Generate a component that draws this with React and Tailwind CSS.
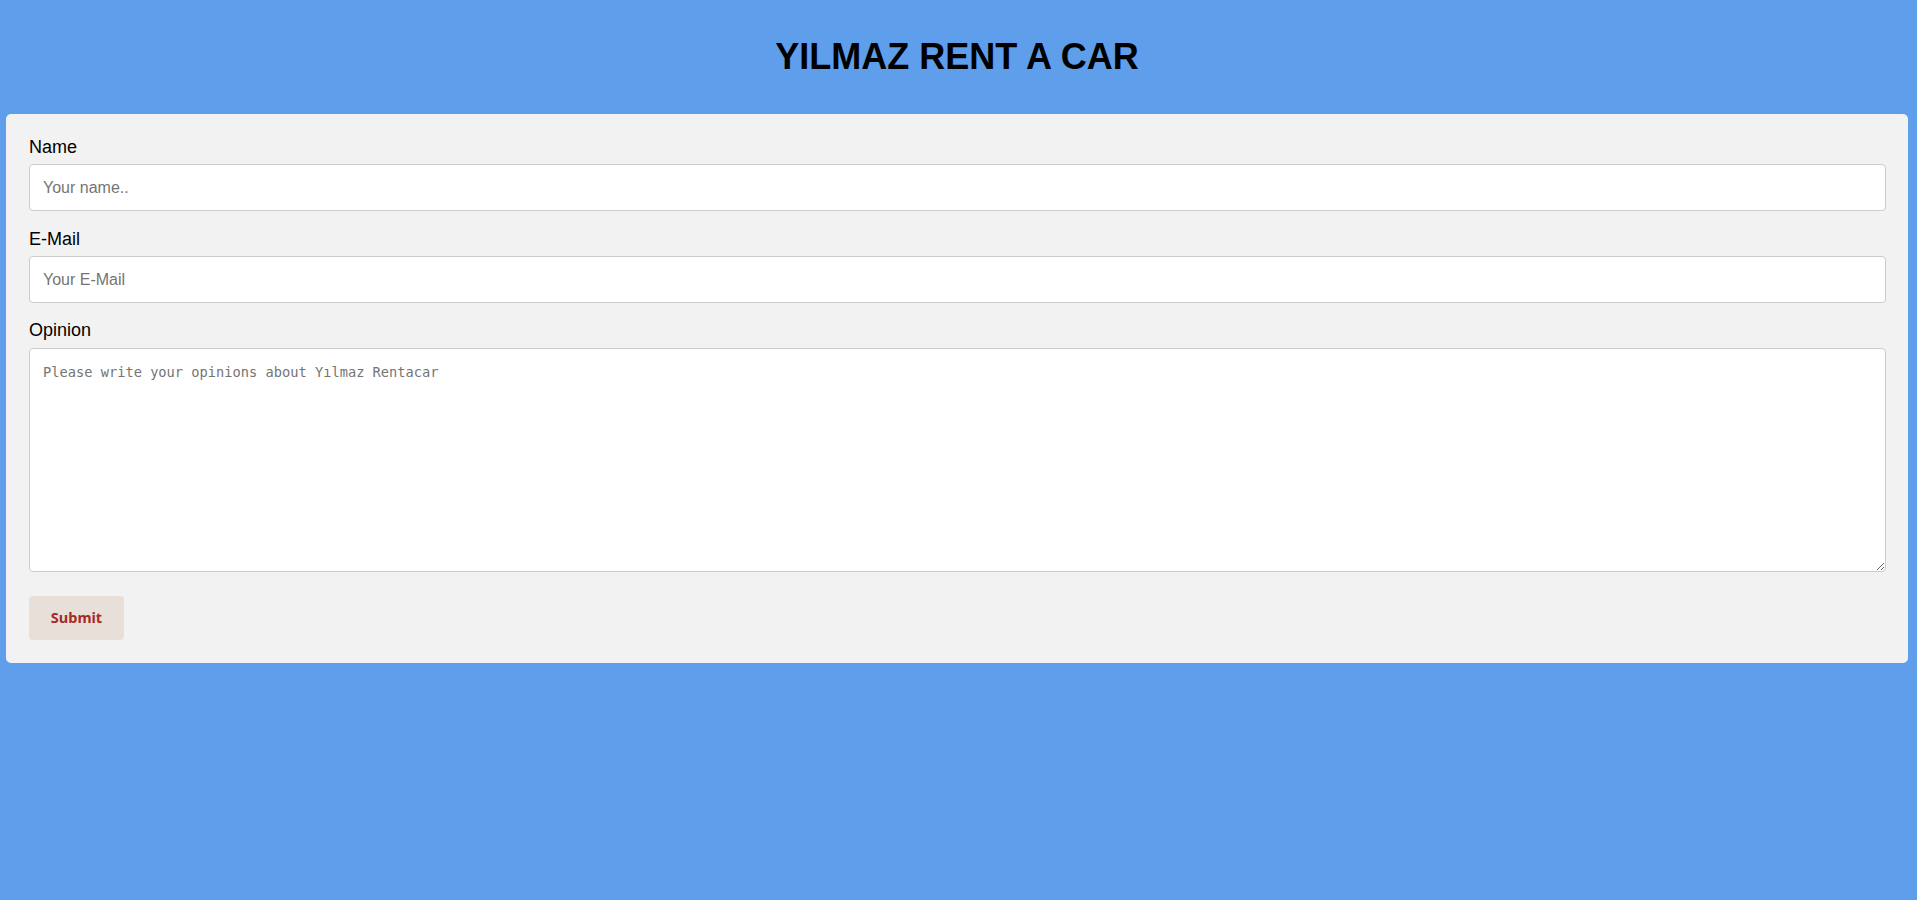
export default function App() {
  return (
    <div className="min-h-[900px] bg-[#5e9eeb] font-['Liberation_Sans',Arial,sans-serif] text-black">
      {/* Header */}
      <h1 className="pt-[36px] pb-[37px] pr-[3px] text-center text-[36px] leading-[41px] font-bold">
        YILMAZ RENT A CAR
      </h1>

      {/* Feedback form */}
      <form
        className="ml-[6px] mr-[9px] rounded-[5px] bg-[#f2f2f2] pt-[23px] pb-[23px] pl-[23px] pr-[22px]"
        onSubmit={(e) => e.preventDefault()}
      >
        <label htmlFor="name" className="block text-[18px] leading-[21px]">
          Name
        </label>
        <input
          id="name"
          type="text"
          placeholder="Your name.."
          className="mt-[6px] block h-[47px] w-full rounded-[4px] border border-[#cccccc] bg-white px-[13px] text-[16px] placeholder:text-[#757575] focus:outline-none"
        />

        <label htmlFor="email" className="mt-[18px] block text-[18px] leading-[21px]">
          E-Mail
        </label>
        <input
          id="email"
          type="email"
          placeholder="Your E-Mail"
          className="mt-[6px] block h-[47px] w-full rounded-[4px] border border-[#cccccc] bg-white px-[13px] text-[16px] placeholder:text-[#757575] focus:outline-none"
        />

        <label htmlFor="opinion" className="mt-[17px] block text-[18px] leading-[21px]">
          Opinion
        </label>
        <textarea
          id="opinion"
          placeholder="Please write your opinions about Yılmaz Rentacar"
          className="mt-[7px] block h-[224px] w-full rounded-[4px] border border-[#cccccc] bg-white px-[13px] pt-[15px] pb-[12px] font-['DejaVu_Sans_Mono',monospace] text-[13.7px] leading-[17px] placeholder:text-[#757575] focus:outline-none"
        />

        <button
          type="submit"
          className="mt-[24px] flex h-[44px] w-[95px] items-center justify-center rounded-[4px] bg-[#e8e0d8] font-['Noto_Sans',sans-serif] text-[14.5px] font-bold text-[#a52a2a]"
        >
          Submit
        </button>
      </form>
    </div>
  );
}
